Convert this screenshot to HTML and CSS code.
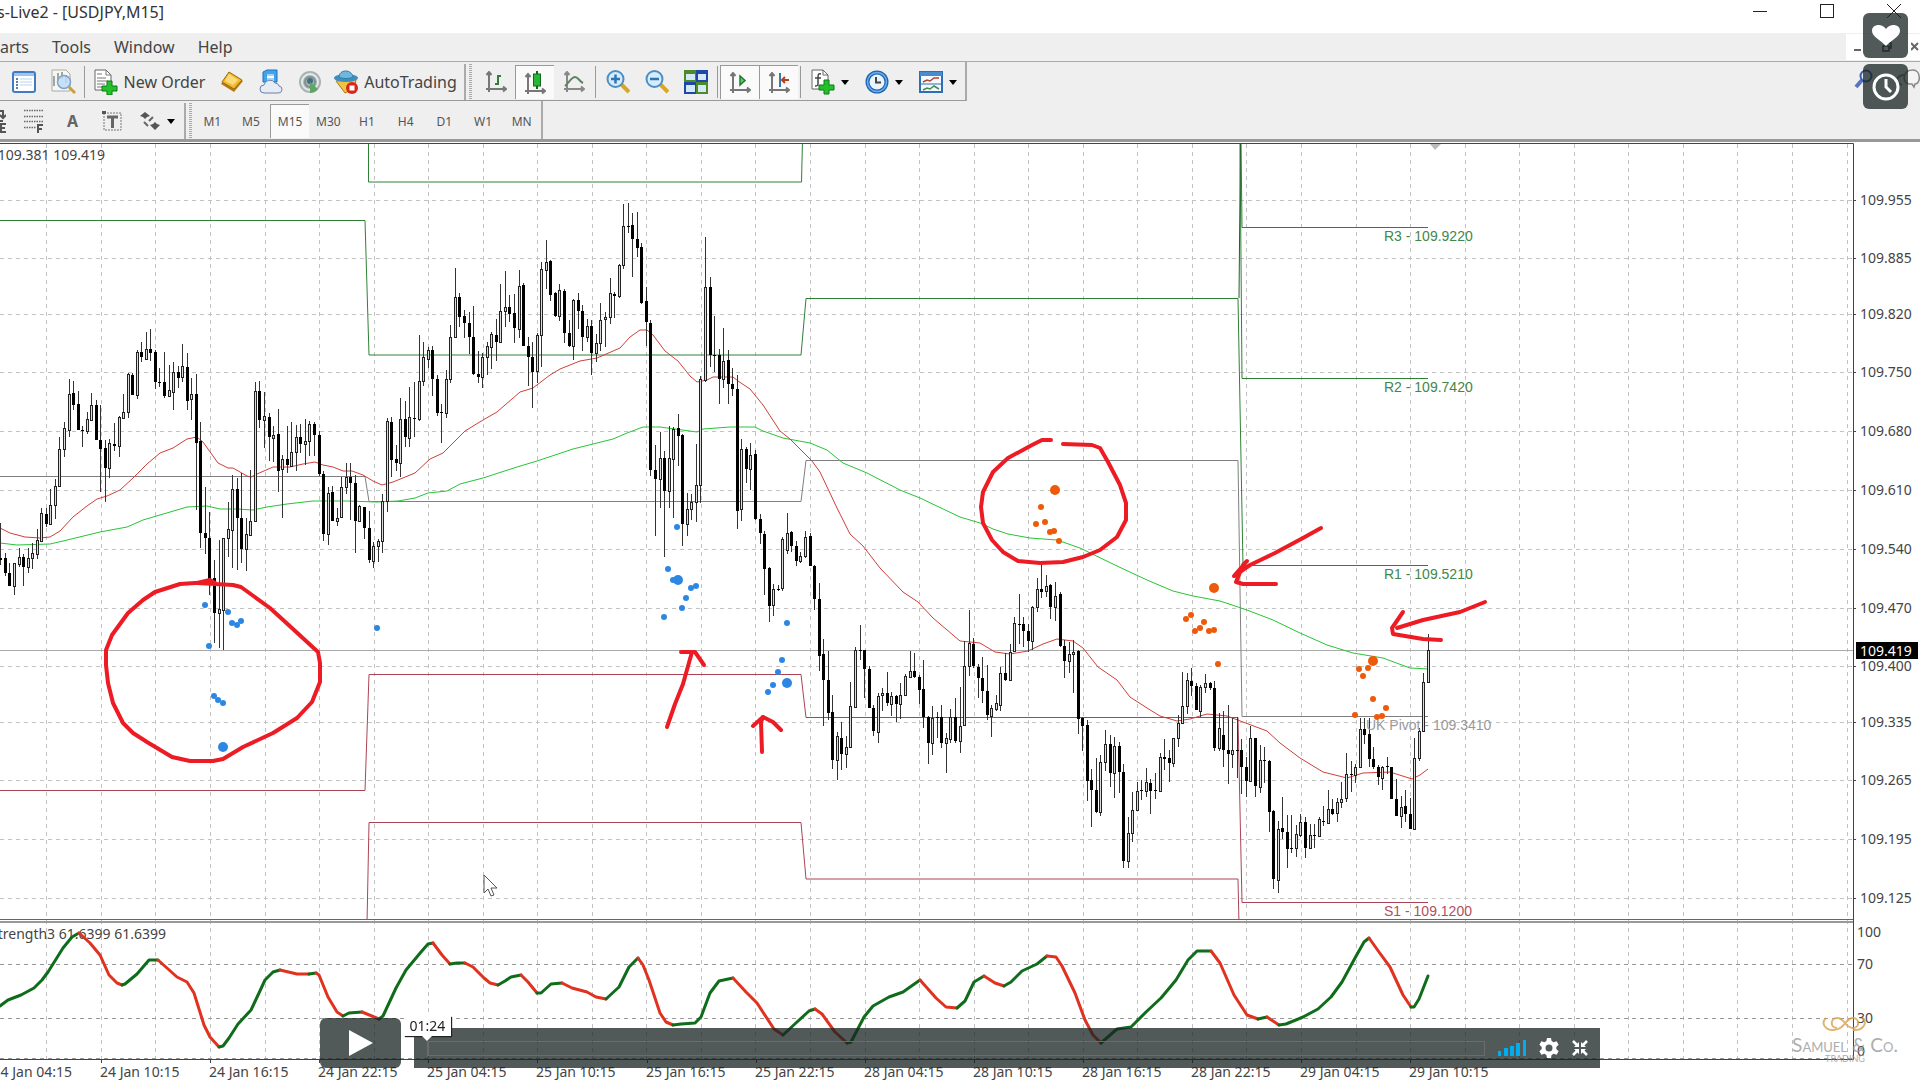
FILE: index.html
```html
<!DOCTYPE html>
<html lang="en">
<head>
    <meta charset="UTF-8">
    <meta name="viewport" content="width=device-width, initial-scale=1.0">
    <title>USDJPY,M15</title>
    <link rel="stylesheet" href="styles.css">
</head>
<body>

    <header class="window-top">
        <div class="title-bar">
            <span class="title">s-Live2 - [USDJPY,M15]</span>
            <div class="window-buttons">
                <button aria-label="Minimize"><svg width="14" height="14"><path d="M0 7.500h14" stroke="#222"/></svg></button>
                <button aria-label="Maximize"><svg width="14" height="14"><rect x=".5" y=".5" width="13" height="13" fill="none" stroke="#222"/></svg></button>
                <button aria-label="Close"><svg width="14" height="14"><path d="M0 0l14 14M14 0L0 14" stroke="#222"/></svg></button>
            </div>
        </div>

        <nav class="menu-bar">
            <a href="#">arts</a>
            <a href="#">Tools</a>
            <a href="#">Window</a>
            <a href="#">Help</a>
            <div class="child-buttons">
                <button aria-label="Minimize chart"><svg width="8" height="10"><path d="M0 8h7" stroke="#666" stroke-width="2"/></svg></button>
                <button aria-label="Restore chart"><svg width="10" height="10"><path d="M3 1h6v5H7M1 4h6v5H1z" fill="none" stroke="#444" stroke-width="1.500"/></svg></button>
                <button aria-label="Close chart"><svg width="8" height="10"><path d="M0 1l7 7M7 1L0 8" stroke="#666" stroke-width="2"/></svg></button>
            </div>
        </nav>

        <div class="toolbar-row">
            <div class="toolbar main-tools">
                <button class="tool" aria-label="Navigator">
                    <svg width="24" height="24" viewBox="0 0 24 24"><rect x="1" y="2" width="22" height="20" rx="2" fill="#fff" stroke="#3f7cc4" stroke-width="2"/><path d="M2 3h20v3H2z" fill="#9cc4ee"/><path d="M4 9h2M4 12h2M4 15h2M4 18h2" stroke="#29559a" stroke-width="1.500"/><path d="M8 9h12M8 12h12M8 15h12" stroke="#b9d3ee"/></svg>
                </button>
                <button class="tool" aria-label="Strategy tester">
                    <svg width="26" height="26" viewBox="0 0 26 26"><path d="M2 1h14l4 4v17H2z" fill="#f6f6f3" stroke="#aaa"/><path d="M4 7v10M8 4v9M12 3v7M16 6v8" stroke="#555"/><circle cx="14" cy="13" r="6.500" fill="#bcdcf7" fill-opacity=".85" stroke="#7fa4c9" stroke-width="1.500"/><path d="M19 18l6 6" stroke="#c9a13b" stroke-width="3"/></svg>
                </button>
                <span class="separator"></span>
                <button class="tool new-order">
                    <svg width="24" height="26" viewBox="0 0 24 26"><path d="M1 1h11l5 5v15H1z" fill="#fff" stroke="#666"/><path d="M12 1v5h5M3 5h5M3 9h9M3 12h11M3 15h8M3 18h7" fill="none" stroke="#777"/><path d="M13 12h5v5h5v5h-5v4h-5v-4H8v-5h5z" fill="#23c02b" stroke="#0b7c12"/></svg>
                    New Order
                </button>
                <button class="tool" aria-label="Meta editor">
                    <svg width="24" height="22" viewBox="0 0 24 22"><path d="M9 1l14 9-9 11L1 13z" fill="#b47b12"/><path d="M9 1l13 8-8 9L2 11z" fill="#f3b92f" stroke="#9b6a10"/><path d="M9 3l9 6-5 5-8-4z" fill="#fbdc7b"/></svg>
                </button>
                <button class="tool" aria-label="Market">
                    <svg width="24" height="26" viewBox="0 0 24 26"><path d="M4 3l4-2h10v12H4z" fill="#3fa4ee" stroke="#1d73bd"/><path d="M8 5h7v8H8z" fill="#9ed3fb"/><path d="M8 8h7" stroke="#fff" stroke-width="2"/><path d="M5 24a4 4 0 0 1 0-8 6 6 0 0 1 11-2 4 4 0 0 1 4 3 3.500 3.500 0 0 1-1 7z" fill="#e6ecf6" stroke="#6f80a6"/></svg>
                </button>
                <button class="tool" aria-label="Signals">
                    <svg width="24" height="24" viewBox="0 0 24 24"><circle cx="12" cy="12" r="11" fill="#a9b3b3"/><circle cx="12" cy="12" r="8" fill="none" stroke="#e4eaea" stroke-width="2"/><circle cx="12" cy="12" r="5" fill="none" stroke="#7d9093" stroke-width="2"/><circle cx="12" cy="11" r="3" fill="#41717c"/><path d="M12 12v11a11 11 0 0 0 8-4z" fill="#5fa665"/></svg>
                </button>
                <button class="tool auto-trading">
                    <svg width="24" height="24" viewBox="0 0 24 24"><path d="M2 11l9 12 10-5 1-9z" fill="#f0c442" stroke="#a87b1a"/><ellipse cx="12" cy="8" rx="12" ry="4" fill="#3c8fc0"/><path d="M5 7c0-8 13-8 14 0-4 2-10 2-14 0z" fill="#6db8dd" stroke="#317da9"/><circle cx="18" cy="18" r="6" fill="#d9251b"/><rect x="15.500" y="15.500" width="5" height="5" fill="#fff"/></svg>
                    AutoTrading
                </button>
                <span class="toolbar-end"></span>
                <button class="tool" aria-label="Bar chart">
                    <svg width="22" height="22" viewBox="0 0 22 22"><path d="M4 1v20M1 18h20M1.500 4L4 1l2.500 3M18 15.500l3 2.500-3 2.500" fill="none" stroke="#777" stroke-width="2"/><path d="M13 4v10M10 13h3M13 5h3" stroke="#2f7d3a" stroke-width="2"/></svg>
                </button>
                <button class="tool pressed" aria-label="Candlesticks">
                    <svg width="22" height="24" viewBox="0 0 22 24"><path d="M4 3v20M1 20h20M1.500 6L4 3l2.500 3M18 17.500l3 2.500-3 2.500" fill="none" stroke="#777" stroke-width="2"/><path d="M13 0v18" stroke="#17601d" stroke-width="2"/><rect x="9.500" y="3" width="7" height="12" fill="#27b636" stroke="#106a1a"/></svg>
                </button>
                <button class="tool" aria-label="Line chart">
                    <svg width="22" height="22" viewBox="0 0 22 22"><path d="M4 1v20M1 18h20M1.500 4L4 1l2.500 3M18 15.500l3 2.500-3 2.500" fill="none" stroke="#888" stroke-width="2"/><path d="M2 15c5-5 7-9 10-9s4 4 8 6" fill="none" stroke="#5e8264" stroke-width="2"/></svg>
                </button>
                <span class="separator"></span>
                <button class="tool" aria-label="Zoom in">
                    <svg width="24" height="24" viewBox="0 0 24 24"><path d="M15 14l8 8" stroke="#d8a727" stroke-width="4"/><circle cx="9.500" cy="9" r="8" fill="#d4ecfb" stroke="#4e8dc5" stroke-width="2"/><path d="M9.500 4.500v9M5 9h9" stroke="#2e74b2" stroke-width="2.500"/></svg>
                </button>
                <button class="tool" aria-label="Zoom out">
                    <svg width="24" height="24" viewBox="0 0 24 24"><path d="M15 14l8 8" stroke="#d8a727" stroke-width="4"/><circle cx="9.500" cy="9" r="8" fill="#d4ecfb" stroke="#4e8dc5" stroke-width="2"/><path d="M5 9h9" stroke="#2e74b2" stroke-width="2.500"/></svg>
                </button>
                <button class="tool" aria-label="Tile windows">
                    <svg width="24" height="24" viewBox="0 0 24 24"><path d="M0 0h12v12H0zM12 12h12v12H12z" fill="#4d8a29"/><path d="M12 0h12v12H12zM0 12h12v12H0z" fill="#1d48a5"/><path d="M2 4h9v6H2zM14 4h8v6h-8zM2 15h9v7H2zM14 15h8v7h-8z" fill="#d4e8f8"/></svg>
                </button>
                <span class="separator"></span>
                <button class="tool pressed" aria-label="Auto scroll">
                    <svg width="22" height="22" viewBox="0 0 22 22"><path d="M4 1v20M1 18h20M1.500 4L4 1l2.500 3M18 15.500l3 2.500-3 2.500" fill="none" stroke="#777" stroke-width="2"/><path d="M11 4v9l5-4.500z" fill="#5fcf6c" stroke="#1d7d2b" stroke-width="1.500"/></svg>
                </button>
                <button class="tool pressed" aria-label="Chart shift">
                    <svg width="22" height="22" viewBox="0 0 22 22"><path d="M4 1v20M1 18h20M1.500 4L4 1l2.500 3M18 15.500l3 2.500-3 2.500" fill="none" stroke="#777" stroke-width="2"/><path d="M12 1v14" stroke="#3f78a8" stroke-width="2"/><path d="M21 8h-7M17 5l-3 3 3 3" fill="none" stroke="#b4401f" stroke-width="2"/></svg>
                </button>
                <span class="separator"></span>
                <button class="tool drop" aria-label="Indicators">
                    <svg width="24" height="26" viewBox="0 0 24 26"><path d="M1 1h11l5 5v14H1z" fill="#fff" stroke="#666"/><path d="M12 1v5h5" fill="none" stroke="#666"/><path d="M10 5c-3-1-3 1-3 4v6c0 2-1 2-3 2M4 9h6" fill="none" stroke="#444" stroke-width="1.500"/><path d="M13 11h5v5h5v5h-5v4h-5v-4H8v-5h5z" fill="#23c02b" stroke="#0b7c12"/></svg>
                    <svg class="arrow" width="8" height="5"><path d="M0 0h8L4 5z"/></svg>
                </button>
                <button class="tool drop" aria-label="Periods">
                    <svg width="24" height="24" viewBox="0 0 24 24"><circle cx="12" cy="12" r="11.500" fill="#1d62b0"/><circle cx="12" cy="12" r="9.500" fill="none" stroke="#6db0ee" stroke-width="1.500"/><circle cx="12" cy="12" r="7.500" fill="#e9f3fb"/><path d="M11 7v5.500h5" fill="none" stroke="#444" stroke-width="2"/></svg>
                    <svg class="arrow" width="8" height="5"><path d="M0 0h8L4 5z"/></svg>
                </button>
                <button class="tool drop" aria-label="Templates">
                    <svg width="24" height="22" viewBox="0 0 24 22"><rect x="1" y="1" width="22" height="20" fill="#f3f9fe" stroke="#2f6eb5" stroke-width="2"/><path d="M1 1h22v4H1z" fill="#4a8bd0"/><path d="M2 13h20" stroke="#2f6eb5"/><path d="M4 11l4-2 3 1 4-3 5 0" fill="none" stroke="#b54430" stroke-width="1.500"/><path d="M4 19l4-2 3 1 4-3 5 3" fill="none" stroke="#468a51" stroke-width="1.500"/></svg>
                    <svg class="arrow" width="8" height="5"><path d="M0 0h8L4 5z"/></svg>
                </button>
            </div>
            <button class="search-button" aria-label="Search">
                <svg width="72" height="22" viewBox="0 0 72 22"><path d="M14 11l-6 7" stroke="#5a75c0" stroke-width="4"/><circle cx="18" cy="7" r="5.500" fill="#e1edfb" stroke="#3c5cad" stroke-width="2"/><path d="M49 10c2-4 7-5 10-3M49 10c0 3 2 5 5 6" fill="none" stroke="#888" stroke-width="2"/><path d="M61 15c-7-1-7-14 4-14 8 0 8 14 2 14l-1 3-2-3z" fill="#f4f4f4" stroke="#888" stroke-width="1.500"/></svg>
            </button>
        </div>

        <div class="toolbar-row">
            <div class="toolbar line-tools">
                <button class="tool cut" aria-label="Equidistant channel">
                    <svg width="6" height="24" viewBox="0 0 6 24"><path d="M0 2l3 0 0 7M0 6l3 3 3-3M0 12h3" fill="none" stroke="#555" stroke-width="2"/><path d="M6 15H1v8h5M1 19h4" fill="none" stroke="#555" stroke-width="2"/></svg>
                </button>
                <button class="tool" aria-label="Fibonacci">
                    <svg width="21" height="24" viewBox="0 0 21 24"><path d="M1 1.500h19M1 7.500h19M1 12.500h19M1 18.500h12" stroke="#666" stroke-width="1.500" stroke-dasharray="1.500 1"/><path d="M15 24v-8h5M15 20h4" fill="none" stroke="#555" stroke-width="2"/></svg>
                </button>
                <button class="tool letter">A</button>
                <button class="tool" aria-label="Text label">
                    <svg width="20" height="22" viewBox="0 0 20 22"><rect x="2" y="3" width="17" height="17" fill="none" stroke="#777" stroke-dasharray="2 1"/><path d="M5 7h11M10.500 7v11" stroke="#666" stroke-width="3"/><path d="M0 1h4v3H0z" fill="#555"/></svg>
                </button>
                <button class="tool drop" aria-label="Arrows">
                    <svg width="22" height="20" viewBox="0 0 22 20"><path d="M1 5l5-4 5 4-3 1-2 2-2-2zM11 14l3-1 2-2 2 2 3 1-5 5z" fill="#555"/><path d="M5 11l4 4M10 10l4-4" fill="none" stroke="#666" stroke-width="2"/></svg>
                    <svg class="arrow" width="8" height="5"><path d="M0 0h8L4 5z"/></svg>
                </button>
                <span class="toolbar-end"></span>
                <div class="timeframes">
                    <button>M1</button>
                    <button>M5</button>
                    <button class="active">M15</button>
                    <button>M30</button>
                    <button>H1</button>
                    <button>H4</button>
                    <button>D1</button>
                    <button>W1</button>
                    <button>MN</button>
                </div>
            </div>
        </div>
    </header>

    <main>
        <svg class="chart" id="chart" viewBox="0 142 1920 938" role="img" aria-label="USDJPY M15 chart">
            <g id="grid"></g>
            <path d="M1430 144h11l-6 6z" fill="#bbb"/>

            <clipPath id="plot"><rect x="0" y="144" width="1853" height="776"/></clipPath>
            <g class="pivots" clip-path="url(#plot)">
                <path class="bid" d="M0 650.500H1853"/>
                <path class="resistance" d="M0 220.500H365L369 355H801L806 298.500H1238L1243 565.500H1428"/>
                <path class="resistance" d="M368.500 140V182H801.500L802.500 140M1240 140L1242 378.500H1428"/>
                <path class="resistance" d="M1241 140L1242 227.500H1428"/>
                <path class="resistance dark" d="M1239 298L1240.500 140"/>
                <path class="pivot" d="M0 476.500H365L369 501.500H801L806 460.500H1238L1242 716.500H1428"/>
                <path class="support" d="M0 790.500H365L369 674.500H801L806 717.500H1238L1242 902.500H1428"/>
                <path class="support" d="M367 924L369 822.500H801L806 879H1238L1239 924"/>
            </g>

            <polyline class="slow-ma" points="0,543 17,545 50,544 63,541 100,532 127,527 143,520 187,507 207,506 220,509 237,509 253,510 267,507 287,504 313,501 347,501 377,502 398,501 415,498 428,493 447,491 460,484 483,478 517,467 537,461 573,449 593,444 613,439 627,433 643,427 660,427 697,432 703,429 730,427 755,427 763,431 783,438 810,443 827,450 843,463 867,473 900,490 920,498 960,517 980,523 993,529 1008,534 1030,538 1057,540 1080,548 1117,566 1147,580 1173,591 1193,596 1220,601 1247,610 1273,620 1300,633 1327,645 1353,653 1383,658 1410,668 1428,669"/>
            <polyline class="fast-ma" points="0,528 10,533 25,537 40,538 50,537 60,531 73,517 87,506 97,499 107,496 120,490 133,478 147,464 160,453 173,448 187,439 197,437 203,442 218,463 228,468 233,468 247,476 251,477 257,474 273,467 290,467 303,464 315,462 323,465 333,467 343,471 352,471 363,475 373,481 382,485 393,482 415,473 430,459 443,453 465,431 483,420 497,412 520,392 533,388 550,375 560,369 580,361 597,358 620,348 630,337 640,330 647,330 653,335 665,351 678,361 690,376 697,382 707,380 713,377 733,377 738,381 750,389 763,405 780,431 790,439 803,452 812,461 820,472 837,508 850,534 863,546 880,568 903,592 918,602 933,618 960,641 980,643 995,652 1010,654 1028,651 1043,644 1057,639 1073,641 1083,648 1098,667 1117,680 1130,697 1147,708 1160,716 1177,721 1190,719 1207,714 1227,716 1243,722 1267,731 1280,743 1300,758 1323,772 1347,778 1363,773 1390,772 1412,779 1420,775 1428,769"/>

            <g id="candles"></g>
            <g id="signals"></g>

            <g class="level-labels">
                <text class="green" x="1384" y="241">R3 - 109.9220</text>
                <text class="green" x="1384" y="392">R2 - 109.7420</text>
                <text class="green" x="1384" y="579">R1 - 109.5210</text>
                <text class="gray" x="1366" y="730">UK Pivot - 109.3410</text>
                <text class="maroon" x="1384" y="916">S1 - 109.1200</text>
            </g>

            <!-- freehand notes -->
            <g class="notes">
                <polyline points="215,583 195,583 180,584 155,592 143,600 128,613 112,635 106,650 106,665 108,683 113,703 123,723 133,733 147,742 172,757 190,761 213,761 223,759 243,747 273,733 297,718 312,702 320,682 320,663 318,652 293,629 270,608 241,587 233,585 197,583 210,580 215,583"/>
                <polyline points="1051,440 1042,440 1032,445 1008,458 993,472 983,492 981,507 983,523 992,540 1003,552 1018,561 1040,563 1063,562 1083,557 1100,550 1117,537 1126,520 1126,503 1120,485 1108,462 1100,448 1092,445 1063,444"/>
                <polyline points="1321,528 1303,538 1275,553 1250,565 1234,576 1247,561 1243,565 1236,582 1243,584 1276,584"/>
                <polyline points="1485,602 1460,612 1423,620 1397,628"/>
                <polyline points="1403,612 1392,628 1393,634 1423,639 1441,640"/>
                <polyline points="667,727 675,704 683,684 692,652"/>
                <polyline points="681,652 695,652 704,665"/>
                <polyline points="762,752 761,722 763,717"/>
                <polyline points="753,726 763,717 773,722 781,730"/>
            </g>

            <text class="chart-text" x="105" y="160" text-anchor="end">109.381 109.419</text>
            <text class="chart-text" x="166" y="939" text-anchor="end">trength3 61.6399 61.6399</text>
            <g id="oscillator"></g>

            <!-- frame -->
            <path class="frame" d="M0 143.500H1853.500V1059.500M0 1059.500H1853.500"/>
            <path d="M0 919.500H1853" stroke="#666"/>
            <path d="M0 922H1853" stroke="#999" stroke-width="2"/>
            <g id="axis"></g>

            <path d="M484 875v18l4-4 3 7 3-1-3-7h6z" fill="#fff" stroke="#555"/>

            <g class="watermark">
                <path d="M1826 1018c-6 6 0 12 7 12 12 0 12-12 20-12 7 0 7 10 0 10-8 0-8-10-16-10-7 0-7 10 0 10 M1853 1030c9 1 15-6 10-12" fill="none" stroke="#d9a24c" stroke-width="2"/>
                <text class="brand" x="1845" y="1052" text-anchor="middle">Samuel &amp; Co.</text>
                <text class="brand-sub" x="1845" y="1062" text-anchor="middle">TRADING</text>
            </g>
        </svg>
    </main>

    <div class="side-buttons">
        <button aria-label="Like"><svg width="28" height="22" viewBox="0 0 28 22"><path d="M14 21C9 15 0 12 0 6c0-7 10-8 14-2 4-6 14-5 14 2 0 6-9 9-14 15z" fill="#fff"/></svg></button>
        <button aria-label="Watch later"><svg width="28" height="28" viewBox="0 0 28 28"><circle cx="14" cy="14" r="12" fill="none" stroke="#fff" stroke-width="3"/><path d="M14 6v8l5 5" fill="none" stroke="#fff" stroke-width="3"/></svg></button>
    </div>

    <div class="player">
        <button class="play" aria-label="Play"><svg width="24" height="26"><path d="M0 0l24 13L0 26z" fill="#fff"/></svg></button>
        <div class="control-bar">
            <input class="progress" type="range" min="0" max="100" value="0" aria-label="Progress">
            <button aria-label="Volume"><svg width="28" height="16"><path d="M0 11h3v5H0zM6 8h4v8H6zM12 6h4v10h-4zM18 3h4v13h-4zM25 0h3v16h-3z" fill="#00adef"/></svg></button>
            <button aria-label="Settings"><svg width="20" height="20" viewBox="0 0 20 20"><path fill-rule="evenodd" fill="#fff" d="M8 0h4l.600 3 2 1.200L17.600 3.200l2 3.600L17.300 9v2l2.300 2.200-2 3.600-3-1L12.600 17 12 20H8l-.600-3-2-1.200-3 1-2-3.600L2.700 11V9L.400 6.800l2-3.600 3 1L7.400 3zM10 6.500a3.500 3.500 0 1 0 0 7 3.500 3.500 0 0 0 0-7z"/></svg></button>
            <button aria-label="Exit full screen"><svg width="16" height="16" viewBox="0 0 16 16"><path d="M1 1l4 4M15 1l-4 4M1 15l4-4M15 15l-4-4" stroke="#fff" stroke-width="2.500"/><path d="M7 2v5H2zM9 2v5h5zM7 14V9H2zM9 14V9h5z" fill="#fff"/></svg></button>
            <span class="time-tip">01:24</span>
        </div>
    </div>

    <script src="chart.js"></script>
</body>
</html>
```

FILE: styles.css
```css
* {
    box-sizing: border-box;
}

body {
    margin: 0;
    background: #fff;
    color: #333;
    font-family: "Noto Sans", "Open Sans", sans-serif;
    font-size: 16px;
    overflow-x: hidden;
}

button {
    display: flex;
    align-items: center;
    justify-content: center;
    padding: 0;
    border: none;
    background: none;
    color: inherit;
    font: inherit;
    cursor: pointer;
}

/* Window header */
.window-top {
    background: #efefef;
    border-bottom: 3px solid #999;
}

.title-bar {
    display: flex;
    justify-content: space-between;
    height: 33px;
    background: #fff;
}

.title {
    margin-left: -3px;
    line-height: 25px;
    white-space: nowrap;
}

.window-buttons {
    display: flex;
    gap: 53px;
    height: 22px;
    margin-right: 19px;
}

.menu-bar {
    display: flex;
    align-items: center;
    height: 28px;
    gap: 23px;
}

.menu-bar a {
    color: #444;
    text-decoration: none;
}

.child-buttons {
    display: flex;
    justify-content: space-between;
    width: 74px;
    height: 26px;
    margin-left: auto;
    padding: 0 1px 0 8px;
    background: #fff;
}

.toolbar-row {
    display: flex;
    justify-content: space-between;
    border-top: 1px solid #aaa;
}

.toolbar-row + .toolbar-row {
    border-top: none;
}

.toolbar {
    display: flex;
    align-items: center;
    border-right: 2px solid #aaa;
}

.main-tools {
    height: 39px;
    padding: 2px 0 0 4px;
    border-bottom: 1px solid #999;
}

.line-tools {
    height: 38px;
    padding-top: 2px;
}

.tool {
    width: 39px;
    height: 34px;
    color: #444;
    white-space: nowrap;
}

.tool.new-order {
    width: 125px;
    gap: 6px;
}

.tool.auto-trading {
    width: 133px;
    gap: 6px;
}

.tool.drop {
    width: 54px;
    gap: 6px;
}

.line-tools .drop {
    width: 51px;
}

.tool.cut {
    width: 14px;
    justify-content: flex-start;
}

.tool.letter {
    color: #666;
    font-weight: bold;
}

.pressed,
.timeframes .active {
    background: #fafafa;
    border-top: 1px solid #999;
    border-left: 1px solid #999;
}

.separator {
    width: 1px;
    height: 32px;
    margin: 0 2px;
    background: #999;
}

.toolbar-end {
    width: 9px;
    height: 100%;
    margin-left: 2px;
    border-left: 2px solid #aaa;
    background: repeating-linear-gradient(#aaa 0 1px, #efefef 1px 2px) 3px 0 / 3px 100% no-repeat;
}

.main-tools .toolbar-end {
    margin: 0 3px 0 2px;
}

.timeframes {
    display: grid;
    grid-template-columns: repeat(9, 1fr);
    width: 348px;
    height: 34px;
    color: #555;
    font-size: 12px;
}

.search-button {
    width: 72px;
    height: 36px;
    overflow: hidden;
}

/* Chart */
.chart {
    display: block;
    width: 100%;
    height: auto;
    font-size: 14px;
}

.chart path,
.chart polyline {
    stroke-linejoin: round;
}

.grid-line {
    stroke: #c2c2c2;
    stroke-dasharray: 4 4;
}

.grid-line.level {
    stroke: #999;
}

.frame {
    fill: none;
    stroke: #444;
}

.pivots path {
    fill: none;
}

.pivots .bid {
    stroke: #aaa;
}

.pivots .resistance {
    stroke: #2f8036;
}

.pivots .dark {
    stroke: #245c2a;
}

.pivots .pivot {
    stroke: #808080;
}

.pivots .support {
    stroke: #aa4455;
}

.fast-ma {
    fill: none;
    stroke: #cf3f38;
}

.slow-ma {
    fill: none;
    stroke: #28c436;
}

.wick {
    stroke: #333;
}

.body-up {
    fill: #ddd;
    stroke: #222;
}

.body-down {
    fill: #000;
}

.buy {
    fill: #2c87e4;
}

.sell {
    fill: #ee5a0a;
}

.notes {
    fill: none;
    stroke: #ed1c24;
    stroke-width: 4;
    stroke-linecap: round;
}

.chart-text {
    fill: #444;
}

.level-labels {
    font-family: "Liberation Sans", Arial, sans-serif;
}

.green {
    fill: #42874a;
}

.gray {
    fill: #999;
}

.maroon {
    fill: #b0505f;
}

.rising,
.falling {
    fill: none;
    stroke-width: 3;
    stroke-linecap: round;
}

.rising {
    stroke: #0f6c1b;
}

.falling {
    stroke: #e0321f;
}

.price-box {
    fill: #000;
}

.price-now {
    fill: #fff;
}

.watermark {
    opacity: 0.8;
}

.brand,
.brand-sub {
    fill: #999;
    font-family: Lato, sans-serif;
}

.brand {
    font-size: 19px;
    font-variant: small-caps;
}

.brand-sub {
    font-size: 9px;
}

/* Player controls */
.side-buttons {
    position: absolute;
    top: 13px;
    right: 12px;
    display: flex;
    flex-direction: column;
    gap: 6px;
}

.side-buttons button {
    width: 45px;
    height: 45px;
    border-radius: 6px;
    background: rgba(23, 35, 34, 0.75);
}

.player {
    position: fixed;
    left: 320px;
    right: 320px;
    bottom: 12px;
    display: flex;
    align-items: flex-end;
    gap: 13px;
}

.play {
    width: 81px;
    height: 50px;
    border-radius: 6px;
    background: rgba(23, 35, 34, 0.75);
}

.control-bar {
    position: relative;
    flex: 1;
    display: flex;
    align-items: center;
    gap: 13px;
    height: 40px;
    padding: 0 12px 0 13px;
    background: rgba(23, 35, 34, 0.75);
}

.progress {
    flex: 1;
    height: 15px;
    margin: 0;
    border: 1px solid #6b6b6b;
    background: none;
    appearance: none;
}

.progress::-webkit-slider-thumb {
    appearance: none;
    width: 1px;
    height: 13px;
    background: #6b6b6b;
}

.time-tip {
    position: absolute;
    left: -10px;
    top: -12px;
    width: 47px;
    background: #fff;
    box-shadow: 1px 1px 1px #222;
    color: #222;
    font-size: 14px;
    line-height: 20px;
    text-align: center;
}

.time-tip::after {
    content: "";
    position: absolute;
    left: 18px;
    top: 20px;
    border: 5px solid transparent;
    border-top-color: #fff;
    border-bottom: none;
}
```

FILE: chart.js
```js
const NS = 'http://www.w3.org/2000/svg';
const STEP = 4.546;   // distance between candles
const START = 0.84;

// high, open, close, low (chart y)
const candles = [
    [523,558,560,565],[553,558,573,576],[563,573,586,586],[563,586,563,595],[548,564,557,567],[554,557,567,586],[548,567,558,573],[543,558,553,569],[529,554,540,559],[508,541,513,541],
    [508,514,524,527],[489,524,505,525],[479,505,486,519],[437,486,449,487],[422,449,428,457],[379,430,394,437],[381,393,405,410],[391,404,430,430],[426,430,430,447],[412,431,419,434],
    [393,420,405,420],[400,405,440,440],[405,440,449,492],[440,448,468,502],[439,468,443,478],[423,444,446,451],[416,446,417,457],[394,418,412,419],[373,412,374,418],[373,375,395,395],
    [350,395,352,399],[342,352,357,362],[332,359,349,360],[329,349,353,361],[350,352,382,389],[368,382,382,387],[352,382,396,398],[365,396,390,397],[362,392,372,410],[366,372,378,388],
    [344,377,366,382],[353,367,401,410],[378,399,394,420],[374,394,443,510],[422,441,533,548],[487,533,538,554],[512,538,579,595],[560,578,613,643],[540,613,609,648],[538,610,538,650],
    [502,538,529,557],[475,530,489,568],[478,489,518,570],[473,518,549,563],[518,549,534,571],[470,535,521,535],[382,521,391,522],[381,391,420,428],[392,420,416,448],[413,417,437,461],
    [426,438,435,462],[409,434,471,492],[455,469,459,518],[426,459,465,473],[422,466,452,467],[425,452,437,471],[424,437,444,453],[419,444,441,465],[421,441,424,456],[422,424,435,456],
    [431,435,474,476],[471,474,534,541],[487,534,493,545],[486,492,521,521],[508,521,518,526],[477,517,487,517],[463,487,477,494],[463,477,483,520],[475,483,521,553],[505,521,506,521],
    [507,507,528,539],[511,528,560,563],[542,561,546,568],[539,546,541,562],[494,541,501,553],[418,501,421,512],[417,422,460,477],[445,459,463,471],[398,463,419,477],[401,419,437,447],
    [387,438,417,447],[382,418,418,437],[335,419,381,421],[342,381,357,386],[347,359,350,368],[346,350,379,396],[375,379,413,416],[404,412,413,443],[370,413,379,418],[325,379,337,383],
    [268,337,297,337],[293,297,317,327],[310,316,323,338],[312,323,337,354],[306,337,374,375],[351,374,377,383],[353,377,357,388],[342,357,346,375],[332,347,334,369],[319,335,342,361],
    [284,342,311,342],[271,311,307,327],[295,307,314,322],[294,313,328,343],[270,329,286,338],[283,285,346,346],[337,346,357,386],[342,357,372,408],[333,371,335,383],[262,335,269,367],
    [240,270,262,289],[260,261,295,301],[292,293,316,317],[284,316,290,321],[289,291,333,343],[320,333,346,347],[299,346,300,360],[293,300,311,329],[305,311,337,351],[319,337,326,342],
    [320,326,353,375],[334,353,343,362],[303,343,320,351],[312,319,317,347],[278,317,293,324],[292,294,296,318],[264,296,265,298],[204,265,226,269],[203,226,226,233],[213,225,239,277],
    [212,239,248,257],[243,247,303,304],[287,301,322,346],[320,323,470,476],[445,470,479,536],[432,479,458,508],[451,458,491,557],[426,491,458,508],[427,459,429,518],[414,428,436,466],
    [434,435,524,546],[493,524,509,536],[494,509,502,520],[444,502,485,522],[376,485,379,503],[237,380,287,382],[277,287,355,367],[316,355,355,372],[349,355,379,404],[328,379,361,388],
    [350,360,384,404],[368,384,389,396],[375,389,511,529],[439,509,449,521],[447,449,469,483],[443,469,455,490],[450,454,519,520],[514,519,533,544],[531,534,569,595],[567,568,606,622],
    [584,605,589,616],[585,589,589,591],[537,588,539,591],[513,550,533,554],[531,532,546,552],[541,546,561,566],[552,561,556,563],[531,556,537,558],[533,536,566,566],[565,566,599,610],
    [583,599,656,671],[639,654,680,726],[651,680,713,720],[695,712,760,769],[732,760,736,780],[722,738,754,770],[736,754,747,768],[682,747,706,747],[647,707,650,707],[625,650,650,660],
    [650,650,669,698],[666,669,708,708],[705,708,731,736],[693,732,696,743],[688,695,693,711],[672,693,703,706],[692,704,696,716],[695,696,704,722],[683,704,695,719],[674,695,676,695],
    [651,677,671,678],[653,671,677,678],[675,677,690,704],[660,689,717,728],[716,717,743,764],[706,743,718,755],[712,717,718,738],[705,717,743,748],[733,743,738,773],[709,739,717,743],
    [698,717,741,743],[687,741,726,753],[641,725,666,726],[610,666,643,676],[638,644,666,668],[664,667,678,698],[657,678,691,703],[665,691,715,720],[705,716,708,737],[695,709,703,711],
    [667,705,673,711],[653,673,680,681],[644,680,652,680],[617,651,623,652],[594,624,624,644],[617,624,631,647],[624,631,641,652],[606,641,607,650],[578,607,589,612],[565,589,592,598],
    [575,591,586,597],[584,585,607,619],[582,607,596,621],[592,594,646,647],[640,646,661,678],[642,661,654,673],[640,654,652,693],[650,651,719,734],[717,718,726,751],[720,725,781,801],
    [769,780,790,827],[758,790,812,813],[755,812,762,816],[730,762,744,771],[735,744,773,787],[737,773,746,798],[742,746,772,793],[764,772,861,868],[817,861,833,868],[792,833,810,842],
    [782,810,791,811],[780,790,791,800],[768,791,782,797],[779,783,791,814],[773,790,791,799],[753,791,757,791],[739,757,759,770],[750,758,763,782],[738,763,738,767],[715,738,723,747],
    [672,723,706,724],[673,706,680,714],[668,681,686,696],[683,686,710,710],[685,711,687,717],[674,687,683,693],[682,683,688,690],[681,688,748,751],[713,748,728,751],[711,735,750,767],
    [705,750,754,784],[718,754,750,768],[717,750,750,778],[739,750,767,794],[757,767,781,797],[726,781,738,781],[738,738,786,797],[745,787,760,793],[747,760,761,783],[760,761,812,832],
    [810,811,879,889],[821,880,829,893],[797,828,832,839],[815,832,849,868],[815,848,849,853],[825,848,834,857],[814,835,822,837],[817,822,848,858],[824,848,835,849],[824,835,835,848],
    [817,836,819,837],[806,821,821,826],[790,823,809,824],[799,809,814,815],[798,813,802,822],[782,802,799,808],[753,798,774,802],[761,774,774,792],[764,775,767,783],[718,767,729,767],
    [718,729,735,744],[718,734,759,767],[747,759,767,769],[765,767,777,785],[766,778,767,790],[757,766,767,774],[767,767,799,799],[779,799,816,816],[796,816,807,828],[790,806,814,822],
    [798,814,829,829],[738,829,758,829],[728,758,731,761],[673,731,682,732],[634,682,650,683]
];

// x, y, radius
const buys = [
    [205,605,3],[209,646,3],[228,612,3],[232,623,3],[237,625,3],[241,621,3],[214,696,3],[218,700,3],[223,703,3],[223,747,5],
    [377,628,3],[677,527,3],[668,569,3],[673,580,3],[678,580,5],[696,586,3],[691,588,3],[686,598,3],[682,608,3],[664,617,3],
    [787,623,3],[782,660,3],[778,672,3],[773,685,3],[768,692,3],[787,683,5]
];
const sells = [
    [1055,490,5],[1041,507,3],[1045,522,3],[1036,524,3],[1050,532,3],[1054,531,3],[1059,541,3],
    [1214,588,5],[1191,615,3],[1186,619,3],[1204,622,3],[1200,628,3],[1195,631,3],[1209,631,3],[1214,630,3],[1218,664,3],
    [1373,661,5],[1359,669,3],[1368,668,3],[1363,676,3],[1373,699,3],[1386,708,3],[1355,715,3],[1377,717,3],[1382,716,3]
];

// Strength line, rising and falling parts take turns
const strength = [
    '0,1006 8,1000 21,995 34,988 42,980 48,972 63,948 72,937 79,933',
    '79,933 90,943 100,955 109,975 117,983 122,985',
    '122,985 125,984 137,974 149,960 158,960',
    '158,960 177,977 187,982 194,993 204,1025 210,1037 219,1047',
    '219,1047 223,1046 229,1038 238,1024 251,1010 259,993 265,980 273,972 280,970',
    '280,970 297,974 309,974',
    '309,974 316,973',
    '316,973 319,975 328,997 337,1012 343,1016',
    '343,1016 349,1013 362,1012',
    '362,1012 379,1019',
    '379,1019 383,1016 396,988 406,970 421,952 428,944 433,943',
    '433,943 442,955 450,964',
    '450,964 457,963 465,963',
    '465,963 473,967 484,978 490,983 498,985',
    '498,985 505,981 511,977 521,975',
    '521,975 528,982 537,993',
    '537,993 541,993 551,984 562,983',
    '562,983 572,988 587,992 596,997 606,999',
    '606,999 619,987 629,967 638,958',
    '638,958 643,965 649,980 660,1013 666,1022 673,1025',
    '673,1025 681,1024 695,1023 701,1017 710,993 719,981 733,978',
    '733,978 746,992 757,1003 774,1029 783,1035',
    '783,1035 797,1022 809,1011 815,1009',
    '815,1009 822,1014 835,1032 847,1043',
    '847,1043 851,1042 864,1017 873,1006 889,997 903,992 920,980',
    '920,980 936,998 946,1007 957,1008',
    '957,1008 965,1001 974,982 984,976',
    '984,976 995,983 1004,986',
    '1004,986 1011,982 1022,971 1037,964 1047,956',
    '1047,956 1056,957 1062,966 1075,993 1085,1020 1093,1035 1101,1043',
    '1101,1043 1117,1029 1131,1027 1146,1012 1161,998 1176,980 1188,960 1197,951 1211,951',
    '1211,951 1220,963 1234,995 1247,1015 1258,1019',
    '1258,1019 1267,1017',
    '1267,1017 1279,1025',
    '1279,1025 1286,1024 1303,1017 1318,1009 1331,997 1342,982 1355,958 1364,942 1369,938',
    '1369,938 1379,952 1390,967 1403,995 1411,1007',
    '1411,1007 1414,1007 1419,999 1428,976'
];

const prices = [
    ['109.955',200],['109.885',258],['109.820',314],['109.750',372],['109.680',431],['109.610',490],['109.540',549],
    ['109.470',608],['109.400',666],['109.335',722],['109.265',780],['109.195',839],['109.125',898]
];

const dates = ['24 Jan 10:15', '24 Jan 16:15', '24 Jan 22:15', '25 Jan 04:15', '25 Jan 10:15', '25 Jan 16:15', '25 Jan 22:15',
    '28 Jan 04:15', '28 Jan 10:15', '28 Jan 16:15', '28 Jan 22:15', '29 Jan 04:15', '29 Jan 10:15'];

function add(parent, tag, attrs, text) {
    const el = document.createElementNS(NS, tag);
    for (const key in attrs) el.setAttribute(key, attrs[key]);
    if (text) el.textContent = text;
    document.getElementById(parent).appendChild(el);
}

function line(parent, cls, x1, y1, x2, y2) {
    add(parent, 'line', { class: cls, x1, y1, x2, y2 });
}

// Grid
for (let i = 10; i < 410; i += 12) {
    const x = Math.round(START + i * STEP) + 0.5;
    line('grid', 'grid-line', x, 144, x, 1059);
}
prices.forEach(([label, y]) => {
    line('grid', 'grid-line', 0, y + 0.5, 1853, y + 0.5);
    line('axis', 'frame', 1853, y + 0.5, 1856, y + 0.5);
    add('axis', 'text', { class: 'chart-text', x: 1860, y: y + 5 }, label);
});
[964, 1018, 1058].forEach(y => line('grid', 'grid-line level', 0, y + 0.5, 1853, y + 0.5));

// Candles
candles.forEach(([high, open, close, low], i) => {
    const x = Math.floor(START + i * STEP) + 0.5;
    const top = Math.min(open, close);
    const height = Math.abs(open - close);
    line('candles', 'wick', x, high, x, low);
    if (close < open) {
        add('candles', 'rect', { class: 'body-up', x: x - 1, y: top + 0.5, width: 2, height });
    } else {
        add('candles', 'rect', { class: 'body-down', x: x - 1.5, y: top, width: 3, height: Math.max(height, 1) });
    }
});

// Signals
buys.forEach(([cx, cy, r]) => add('signals', 'circle', { class: 'buy', cx, cy, r }));
sells.forEach(([cx, cy, r]) => add('signals', 'circle', { class: 'sell', cx, cy, r }));

// Strength
strength.forEach((points, i) => add('oscillator', 'polyline', { class: i % 2 ? 'falling' : 'rising', points }));

// Axis labels
[['100', 937], ['70', 969], ['30', 1023], ['0', 1056]].forEach(([label, y]) => add('axis', 'text', { class: 'chart-text', x: 1857, y }, label));
add('axis', 'text', { class: 'chart-text', x: 72, y: 1077, 'text-anchor': 'end' }, '4 Jan 04:15');
dates.forEach((label, i) => {
    const x = Math.round(100 + i * STEP * 24);
    line('axis', 'frame', x + 1.5, 1059, x + 1.5, 1063);
    add('axis', 'text', { class: 'chart-text', x, y: 1077 }, label);
});
add('axis', 'rect', { class: 'price-box', x: 1856, y: 642, width: 62, height: 17 });
add('axis', 'text', { class: 'price-now', x: 1860, y: 656 }, '109.419');
```
